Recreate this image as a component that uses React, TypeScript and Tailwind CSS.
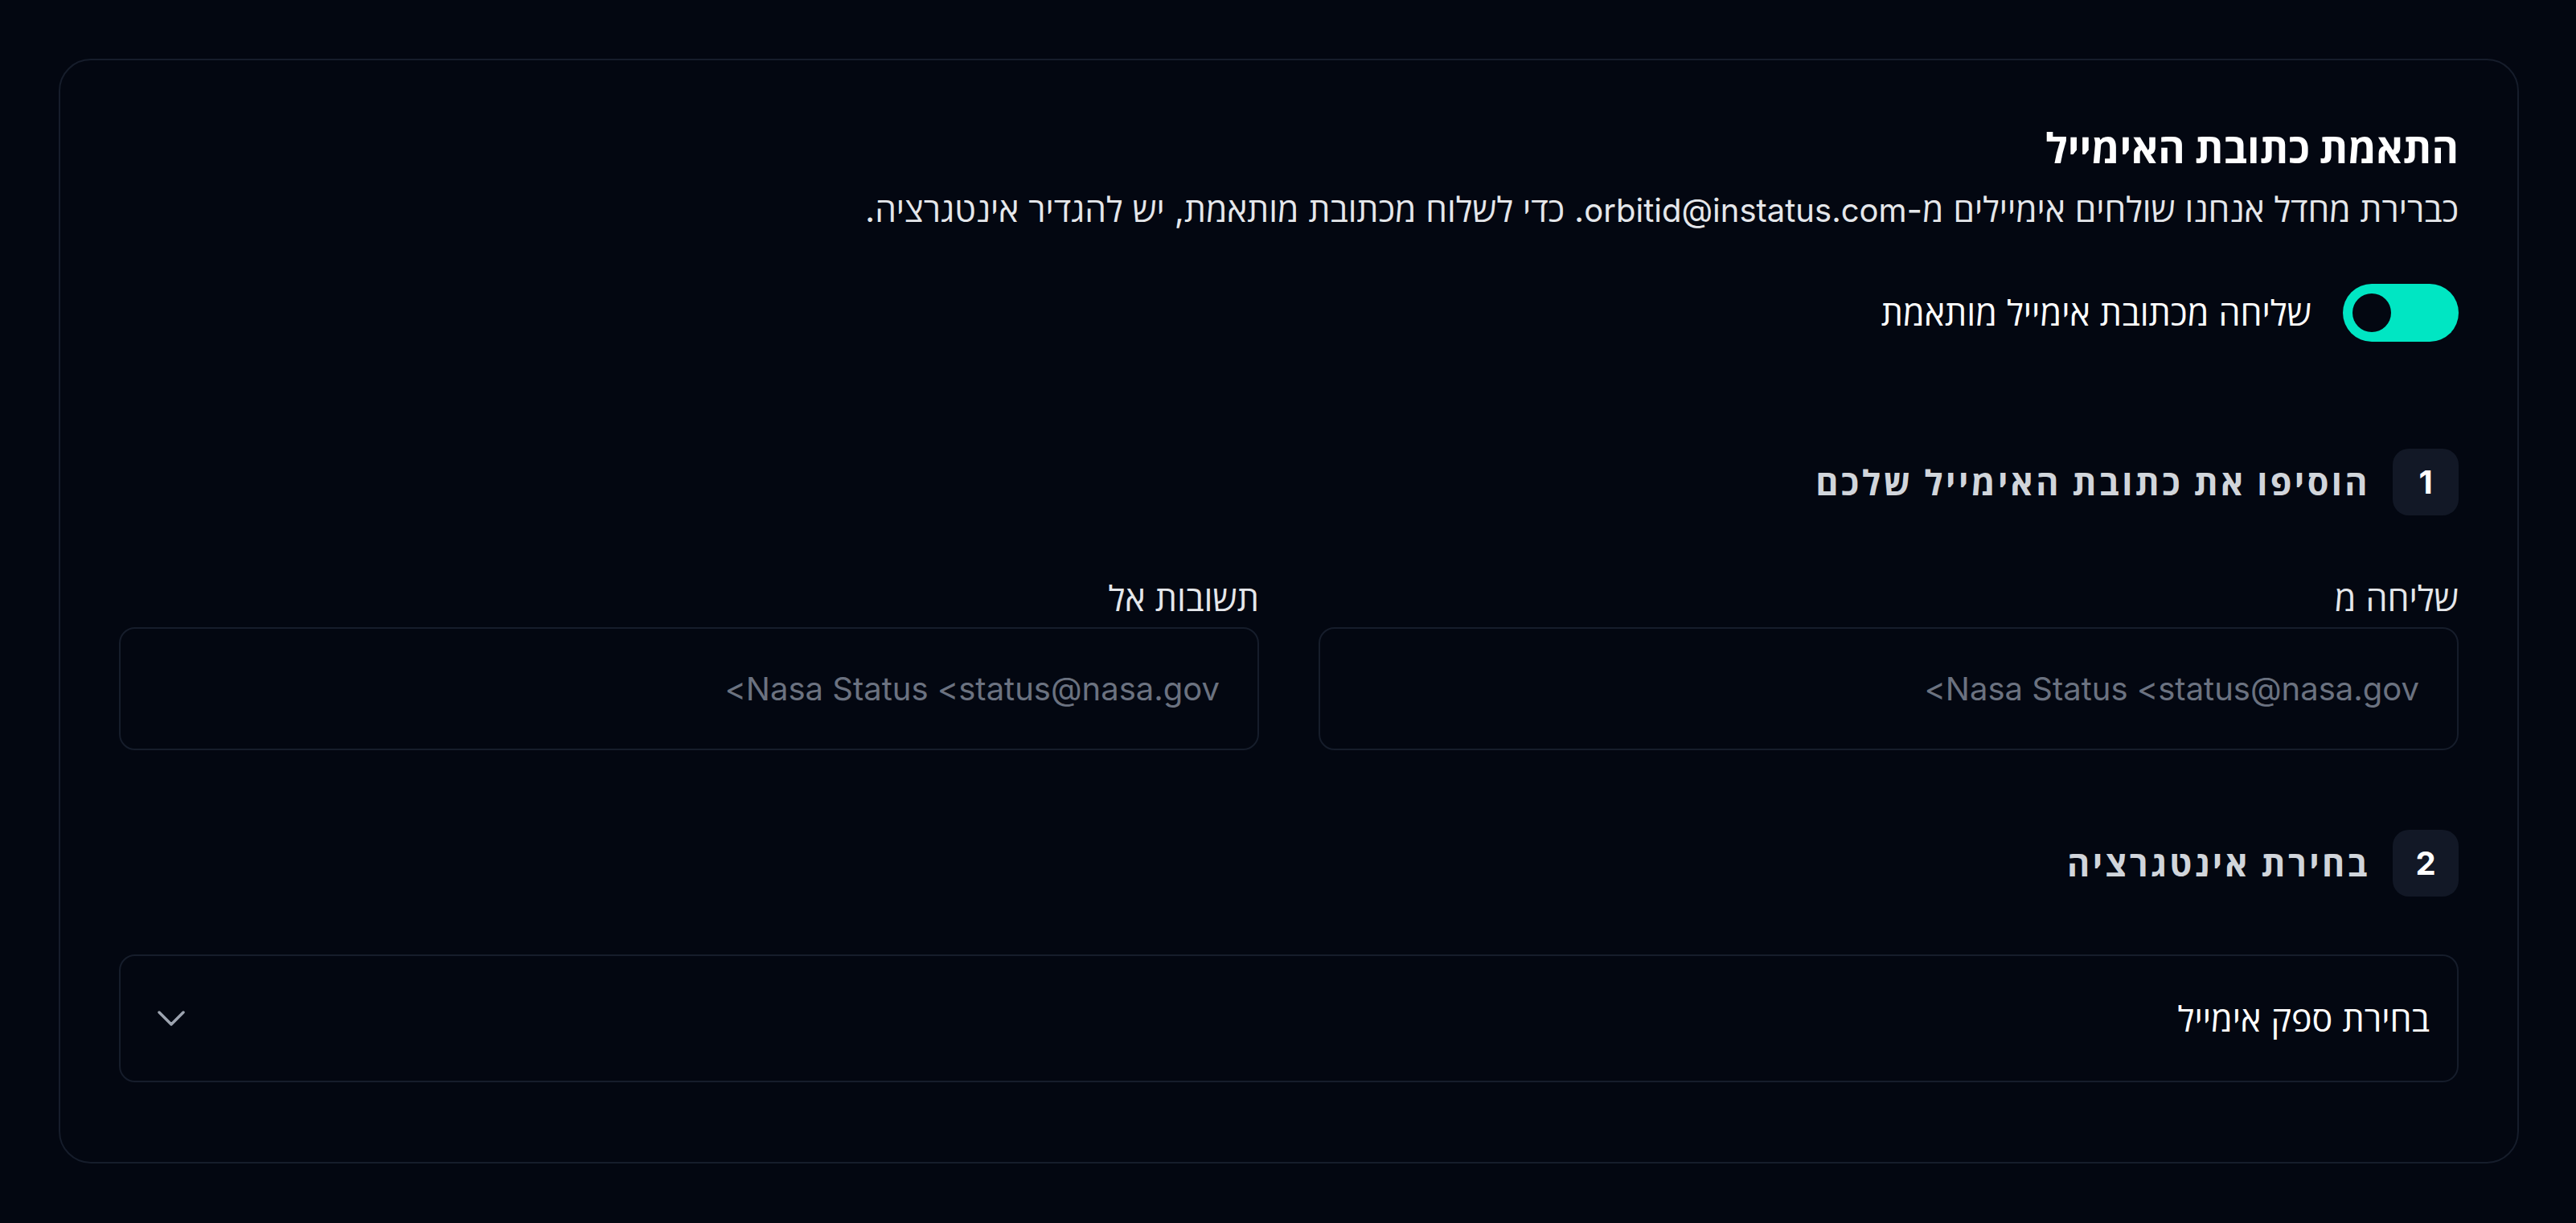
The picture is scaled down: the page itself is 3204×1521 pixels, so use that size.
import React from "react";

function StepHeader({ n, title }: { n: string; title: string }) {
  return (
    <div className="flex items-center gap-[28px]">
      <div className="flex h-[83px] w-[82px] shrink-0 items-center justify-center rounded-[20px] bg-[#121826] text-[40px] font-bold text-white">
        {n}
      </div>
      <div className="text-[43px] font-bold leading-[56px] tracking-[0.08em] text-[#d1d5db]">{title}</div>
    </div>
  );
}

function Field({ label }: { label: string }) {
  return (
    <div className="flex flex-col">
      <label className="text-[43px] leading-[56px] text-[#e5e7eb]">{label}</label>
      <input
        dir="rtl"
        placeholder="Nasa Status <status@nasa.gov>"
        className="mt-[8px] h-[153px] w-full rounded-[20px] border-2 border-[#161d2b] bg-transparent px-[47px] text-[40px] text-white outline-none placeholder:text-[#6b7280]"
      />
    </div>
  );
}

export default function App() {
  return (
    <div
      dir="rtl"
      className="min-h-[1521px] w-full bg-[#030711] pl-[73px] pr-[71px] pt-[73px] font-[Inter,'Open_Sans',sans-serif]"
    >
      <div className="rounded-[40px] border-2 border-[#161d2b] px-[73px] pb-[99px] pt-[78px]">
        <h1 className="text-[51px] font-bold leading-[64px] text-white">התאמת כתובת האימייל</h1>
        <p className="mt-[16px] text-[42.5px] leading-[56px] text-[#e5e7eb]">
          כברירת מחדל אנחנו שולחים אימיילים מ-<span className="text-[40px]">orbitid@instatus.com</span>. כדי לשלוח מכתובת מותאמת, יש להגדיר אינטגרציה.
        </p>
        <div className="mt-[63px] flex items-center gap-[39px]">
          <button
            type="button"
            className="flex h-[72px] w-[144px] shrink-0 items-center justify-end rounded-full bg-[#00e6c3] px-[12px]"
          >
            <span className="block h-[48px] w-[48px] rounded-full bg-[#030711]" />
          </button>
          <span className="text-[43px] leading-[56px] text-white">שליחה מכתובת אימייל מותאמת</span>
        </div>

        <div className="mt-[133px]">
          <StepHeader n="1" title="הוסיפו את כתובת האימייל שלכם" />
        </div>

        <div className="mt-[75px] grid grid-cols-2 gap-[74px]">
          <Field label="שליחה מ" />
          <Field label="תשובות אל" />
        </div>

        <div className="mt-[99px]">
          <StepHeader n="2" title="בחירת אינטגרציה" />
        </div>

        <div className="mt-[72px] flex h-[159px] items-center justify-between rounded-[20px] border-2 border-[#161d2b] pl-[46px] pr-[34px]">
          <span className="text-[43px] leading-[56px] text-white">בחירת ספק אימייל</span>
          <svg width="34" height="20" viewBox="0 0 34 20" fill="none">
            <path d="M2 2 L17 17 L32 2" stroke="#9ca3af" strokeWidth="3.5" strokeLinecap="round" strokeLinejoin="round" />
          </svg>
        </div>
      </div>
    </div>
  );
}
